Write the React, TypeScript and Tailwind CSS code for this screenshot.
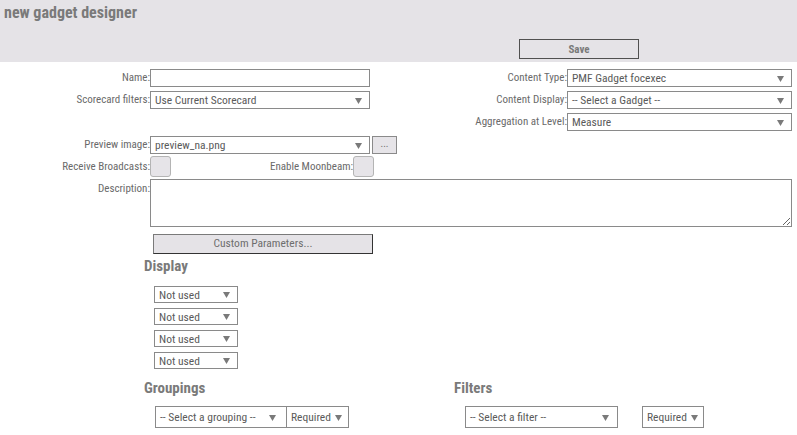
import React from "react";

const Arrow = () => (
  <svg width="7" height="7" viewBox="0 0 7 7" className="shrink-0">
    <path d="M0 1 L7 1 L3.5 7 Z" fill="#7a7a7a" />
  </svg>
);

function Select({ value, className }: { value: string; className: string }) {
  return (
    <div
      className={
        "flex items-center justify-between gap-[4px] border border-[#8a8a8a] bg-white pl-[4px] pr-[7px] text-[11.5px] text-[#5a5a5a] " +
        className
      }
    >
      <span className="whitespace-nowrap leading-[14px]">{value}</span>
      <Arrow />
    </div>
  );
}

function Label({ text, className }: { text: string; className: string }) {
  return (
    <div className={"text-right text-[11px] text-[#6a6a6a] leading-[18px] whitespace-nowrap " + className}>{text}</div>
  );
}

function Check() {
  return (
    <div className="w-[21px] h-[21px] rounded-[3px] border border-[#b4b4b4] bg-[#e6e4e8]" />
  );
}

export default function App() {
  return (
    <div className="w-[797px] h-[435px] overflow-hidden bg-white font-['Roboto_Condensed',Roboto,sans-serif] font-stretch-condensed">
      <div className="h-[62px] bg-[#e5e3e7] flex flex-col">
        <h1 className="pl-[4px] pt-[3px] text-[16px] leading-[20px] font-bold text-[#7a7a7a]">
          new gadget designer
        </h1>
        <div className="flex pl-[519px] pt-[16px]">
          <button className="w-[120px] h-[20px] border border-[#505050] bg-[#e5e3e7] text-[11px] font-bold text-[#7a7a7a] leading-none">
            Save
          </button>
        </div>
      </div>

      <div className="pt-[7px] flex flex-col">
        {/* Row 1 */}
        <div className="flex h-[18px]">
          <Label text="Name:" className="w-[150px]" />
          <div className="w-[220px] h-[18px] border border-[#8a8a8a] bg-white" />
          <Label text="Content Type:" className="w-[197px]" />
          <Select value="PMF Gadget focexec" className="w-[225px] h-[18px]" />
        </div>
        {/* Row 2 */}
        <div className="flex h-[18px] mt-[4px]">
          <Label text="Scorecard filters:" className="w-[150px]" />
          <Select value="Use Current Scorecard" className="w-[220px] h-[18px]" />
          <Label text="Content Display:" className="w-[197px]" />
          <Select value="-- Select a Gadget --" className="w-[225px] h-[18px]" />
        </div>
        {/* Row 3 */}
        <div className="flex h-[18px] mt-[4px]">
          <div className="w-[370px]" />
          <Label text="Aggregation at Level:" className="w-[197px]" />
          <Select value="Measure" className="w-[225px] h-[18px]" />
        </div>
        {/* Row 4 */}
        <div className="flex h-[18px] mt-[5px]">
          <Label text="Preview image:" className="w-[150px]" />
          <Select value="preview_na.png" className="w-[220px] h-[18px]" />
          <button className="ml-[2px] w-[25px] h-[18px] border border-[#8a8a8a] bg-[#e6e4e8] text-[10px] text-[#6e6e6e] leading-none flex items-center justify-center pb-[3px]">
            ...
          </button>
        </div>
        {/* Row 5 */}
        <div className="flex h-[21px] mt-[2px]">
          <Label text="Receive Broadcasts:" className="w-[150px] leading-[21px]" />
          <Check />
          <Label text="Enable Moonbeam:" className="w-[182px] leading-[21px]" />
          <Check />
        </div>
        {/* Row 6 */}
        <div className="flex mt-[2px]">
          <Label text="Description:" className="w-[150px] pt-[1px]" />
          <textarea className="w-[642px] h-[48px] border border-[#8a8a8a] bg-white resize-y outline-none" />
        </div>
        <div className="flex pl-[153px] mt-[7px]">
          <button className="w-[220px] h-[20px] border border-[#7a7a7a] border-r-[#333] border-b-[#333] bg-[#e5e3e7] text-[11.5px] text-[#6e6e6e] leading-none">
            Custom Parameters...
          </button>
        </div>

        {/* Display */}
        <div className="pl-[144px] mt-[2px]">
          <h2 className="text-[15px] leading-[20px] font-bold text-[#7a7a7a]">Display</h2>
          <div className="pl-[10px] mt-[10px] flex flex-col gap-[5px]">
            <Select value="Not used" className="w-[84px] h-[17px]" />
            <Select value="Not used" className="w-[84px] h-[17px]" />
            <Select value="Not used" className="w-[84px] h-[17px]" />
            <Select value="Not used" className="w-[84px] h-[17px]" />
          </div>
        </div>

        {/* Groupings / Filters */}
        <div className="flex mt-[9px]">
          <div className="pl-[144px] w-[453px]">
            <h2 className="text-[15px] leading-[20px] font-bold text-[#7a7a7a]">Groupings</h2>
            <div className="pl-[11px] mt-[8px] flex">
              <Select value="-- Select a grouping --" className="w-[132px] h-[22px] pr-[10px]" />
              <Select value="Required" className="w-[62px] h-[22px] border-l-0 pr-[6px]" />
            </div>
          </div>
          <div className="pl-[1px]">
            <h2 className="text-[15px] leading-[20px] font-bold text-[#7a7a7a]">Filters</h2>
            <div className="pl-[11px] mt-[8px] flex">
              <Select value="-- Select a filter --" className="w-[153px] h-[22px] pr-[8px]" />
              <Select value="Required" className="ml-[24px] w-[62px] h-[22px] pr-[6px]" />
            </div>
          </div>
        </div>
      </div>
    </div>
  );
}
